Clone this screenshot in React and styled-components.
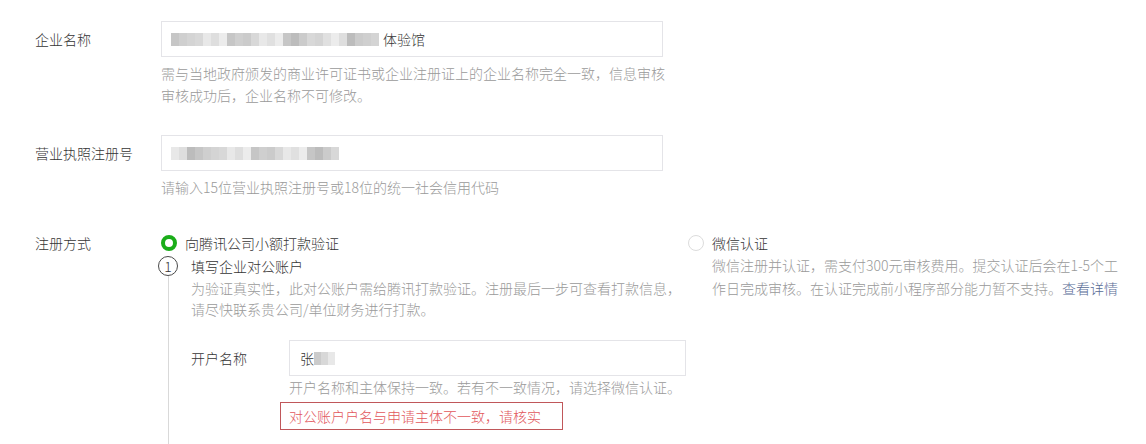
import React from "react";
import styled, { createGlobalStyle } from "styled-components";

const Global = createGlobalStyle`
  html, body { margin: 0; padding: 0; background: #fff; }
  body {
    font-family: "Noto Sans CJK SC", "Noto Sans", "Liberation Sans", sans-serif;
    font-size: 14px;
    font-weight: 300;
    color: #353535;
    overflow: hidden;
  }
`;

const Page = styled.div`
  width: 1146px;
  height: 444px;
  overflow: hidden;
  padding: 21px 0 0 35px;
  box-sizing: border-box;
`;

const Row = styled.div`
  display: flex;
  align-items: flex-start;
  margin-top: ${(p) => p.$top || 0}px;
`;

const Label = styled.div`
  width: ${(p) => p.$w || 126}px;
  flex: none;
  line-height: ${(p) => p.$lh || 36}px;
  color: #353535;
  white-space: nowrap;
`;

const Field = styled.div`
  display: flex;
  flex-direction: column;
`;

const Input = styled.div`
  width: ${(p) => p.$w}px;
  height: 36px;
  box-sizing: border-box;
  border: 1px solid #e4e4e8;
  display: flex;
  align-items: center;
  padding-left: ${(p) => p.$pl || 9}px;
  color: #353535;
`;

const Mosaic = styled.span`
  display: inline-flex;
  height: 13px;
`;

const Tile = styled.span`
  width: ${(p) => p.$w}px;
  height: 13px;
  background: ${(p) => p.$c};
`;

const Help = styled.div`
  color: #9a9a9a;
  line-height: ${(p) => p.$lh || 22}px;
  margin-top: ${(p) => p.$top ?? 5}px;
  white-space: nowrap;
`;

const Options = styled.div`
  display: flex;
  margin-left: -3px;
`;

const Option = styled.div`
  width: ${(p) => p.$w}px;
  flex: none;
`;

const RadioLine = styled.div`
  display: flex;
  align-items: center;
  height: 22px;
  gap: 8px;
  padding-left: ${(p) => p.$pl || 0}px;
`;

const Radio = styled.span`
  width: 16px;
  height: 16px;
  box-sizing: border-box;
  border-radius: 50%;
  border: ${(p) => (p.$on ? "4px solid #1aad19" : "1px solid #dcdcdc")};
  background: #fff;
  flex: none;
`;

const Step = styled.div`
  display: flex;
`;

const Rail = styled.div`
  width: 20px;
  flex: none;
  display: flex;
  flex-direction: column;
  align-items: center;
  padding-top: 2px;
`;

const StepNum = styled.span`
  width: 20px;
  height: 20px;
  box-sizing: border-box;
  border: 1px solid #4a4a4a;
  border-radius: 50%;
  display: flex;
  align-items: center;
  justify-content: center;
  font-size: 14px;
  line-height: 1;
  color: #353535;
  flex: none;
`;

const RailLine = styled.span`
  width: 1px;
  flex: 1;
  background: #d9d9d9;
`;

const StepBody = styled.div`
  padding-left: 13px;
  padding-bottom: 40px;
`;

const StepTitle = styled.div`
  line-height: 24px;
`;

const Desc = styled.div`
  color: #9a9a9a;
  line-height: ${(p) => p.$lh}px;
  white-space: nowrap;
  padding-left: ${(p) => p.$pl || 0}px;
`;

const Link = styled.a`
  color: #576b95;
  text-decoration: none;
`;

const ErrorBox = styled.div`
  margin-top: 5px;
  margin-left: -9px;
  width: 283px;
  height: 28px;
  box-sizing: border-box;
  border: 1px solid #c0575a;
  padding-left: 8px;
  line-height: 26px;
  color: #e2575c;
`;

const shades = ["#dedede", "#cfcfcf", "#e8e8e8", "#c6c6c6", "#d8d8d8", "#ececec", "#cbcbcb", "#e0e0e0", "#bcbcbc", "#d4d4d4"];

function Blur({ count, seed = 0, w = 8 }) {
  const tiles = [];
  for (let i = 0; i < count; i++) {
    tiles.push(<Tile key={i} $w={w} $c={shades[(i * 7 + seed * 3 + (i % 3)) % shades.length]} />);
  }
  return <Mosaic>{tiles}</Mosaic>;
}

export default function App() {
  return (
    <>
      <Global />
      <Page>
        <Row>
          <Label>企业名称</Label>
          <Field>
            <Input $w={502}>
              <Blur count={26} seed={1} />
              <span style={{ marginLeft: 4 }}>体验馆</span>
            </Input>
            <Help>
              需与当地政府颁发的商业许可证书或企业注册证上的企业名称完全一致，信息审核
              <br />
              审核成功后，企业名称不可修改。
            </Help>
          </Field>
        </Row>

        <Row $top={29}>
          <Label>营业执照注册号</Label>
          <Field>
            <Input $w={502}>
              <Blur count={21} seed={4} />
            </Input>
            <Help>请输入15位营业执照注册号或18位的统一社会信用代码</Help>
          </Field>
        </Row>

        <Row $top={34}>
          <Label $lh={22}>注册方式</Label>
          <Options>
            <Option $w={530}>
              <RadioLine $pl={3}>
                <Radio $on />
                <span>向腾讯公司小额打款验证</span>
              </RadioLine>
              <Step>
                <Rail>
                  <StepNum>1</StepNum>
                  <RailLine />
                </Rail>
                <StepBody>
                  <StepTitle>填写企业对公账户</StepTitle>
                  <Desc $lh={21}>
                    为验证真实性，此对公账户需给腾讯打款验证。注册最后一步可查看打款信息，
                    <br />
                    请尽快联系贵公司/单位财务进行打款。
                  </Desc>
                  <Row $top={20}>
                    <Label $w={98}>开户名称</Label>
                    <Field>
                      <Input $w={397} $pl={10}>
                        <span>张</span>
                        <Blur count={3} seed={2} w={7} />
                      </Input>
                      <Help $top={1} $lh={20}>
                        开户名称和主体保持一致。若有不一致情况，请选择微信认证。
                      </Help>
                      <ErrorBox>对公账户户名与申请主体不一致，请核实</ErrorBox>
                    </Field>
                  </Row>
                </StepBody>
              </Step>
            </Option>
            <Option $w={440}>
              <RadioLine>
                <Radio />
                <span>微信认证</span>
              </RadioLine>
              <Desc $lh={23} $pl={24}>
                微信注册并认证，需支付300元审核费用。提交认证后会在1-5个工
                <br />
                作日完成审核。在认证完成前小程序部分能力暂不支持。<Link href="#">查看详情</Link>
              </Desc>
            </Option>
          </Options>
        </Row>
      </Page>
    </>
  );
}
